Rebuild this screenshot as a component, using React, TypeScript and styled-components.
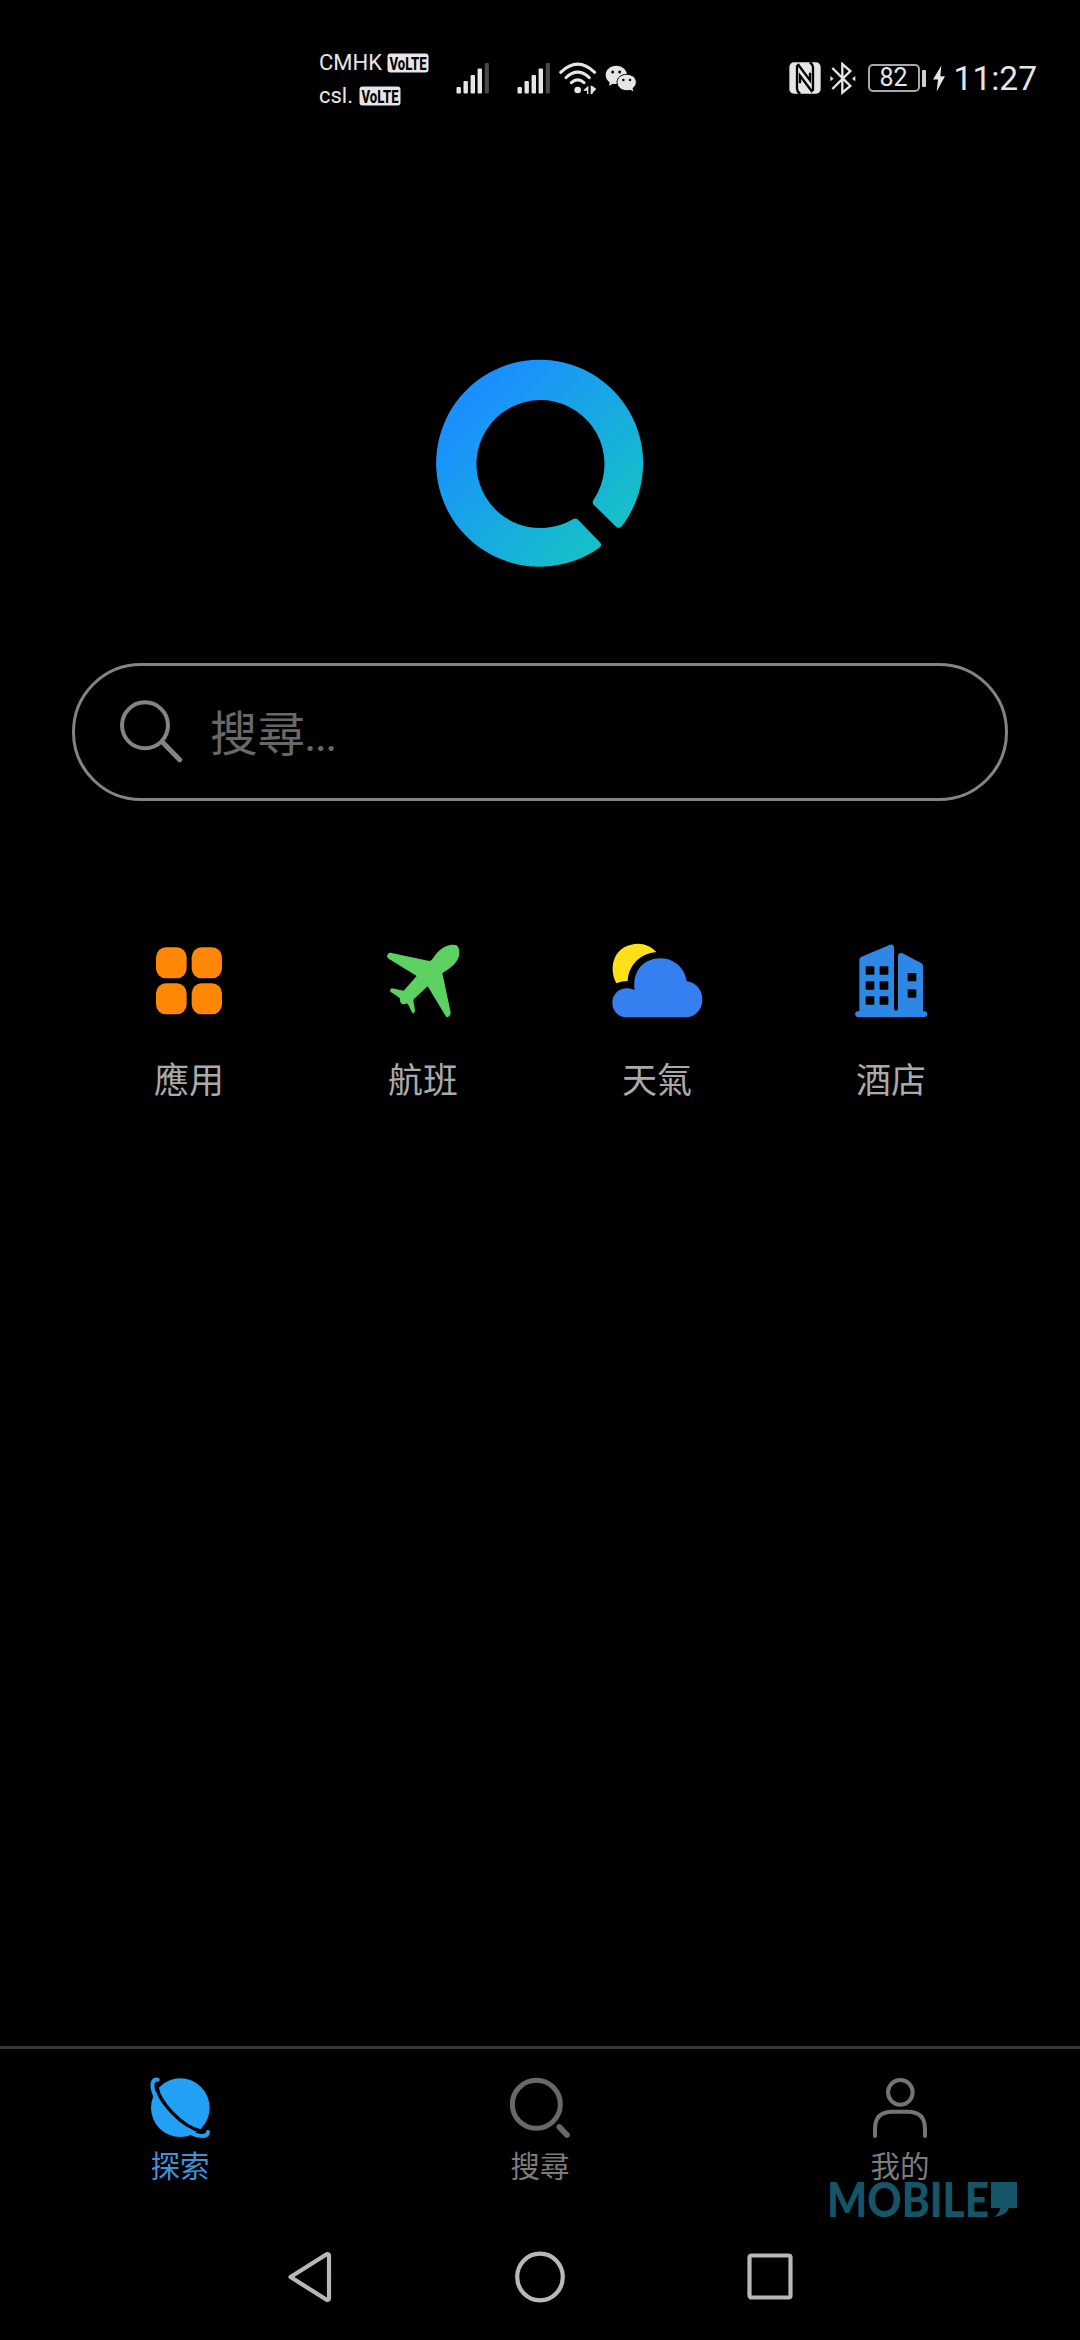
import React from "react";
import styled, { createGlobalStyle } from "styled-components";

const GlobalStyle = createGlobalStyle`
  * { box-sizing: border-box; }
  html, body { margin: 0; padding: 0; background: #000; }
  svg { display: block; flex: none; }
`;

const cjk = `"Noto Sans CJK TC", "Noto Sans", sans-serif`;
const latin = `Roboto, "Noto Sans CJK TC", sans-serif`;

const Screen = styled.div`
  position: relative;
  display: flex;
  flex-direction: column;
  width: 1080px;
  height: 2340px;
  background: #000;
  overflow: hidden;
  font-family: ${cjk};
`;

const StatusBar = styled.header`
  display: flex;
  justify-content: space-between;
  align-items: center;
  height: 156px;
  padding: 0 43px 0 319px;
  color: #e6e6e6;
  font-family: ${latin};
`;

const StatusGroup = styled.div`
  display: flex;
  align-items: center;
`;

const Carriers = styled.div`
  display: flex;
  flex-direction: column;
  width: 137px;
  padding-top: 2px;
`;

const Carrier = styled.div<{ $gap: number }>`
  display: flex;
  align-items: center;
  gap: ${(p) => p.$gap}px;
  height: 33px;
  font-size: 22px;
  line-height: 33px;
`;

const Slot = styled.div<{ $left: number }>`
  margin-left: ${(p) => p.$left}px;
`;

const Battery = styled.div`
  display: flex;
  align-items: center;
  justify-content: center;
  width: 52px;
  height: 28px;
  margin-left: 12px;
  border: 2px solid #a8a8a8;
  border-radius: 5px;
  font-size: 25px;
  line-height: 24px;
`;

const BatteryTip = styled.div`
  width: 4px;
  height: 17px;
  margin-left: 2px;
  border-radius: 1px;
  background: #d0d0d0;
`;

const Clock = styled.time`
  margin-left: 9px;
  padding-top: 1px;
  font-size: 33.5px;
  line-height: 40px;
`;

const Main = styled.main`
  display: flex;
  flex-direction: column;
  align-items: center;
  flex: 1;
  padding: 203px 72px 0;
`;

const SearchBox = styled.div`
  display: flex;
  align-items: center;
  width: 936px;
  height: 138px;
  margin-top: 96px;
  padding-left: 45px;
  border: 3px solid #848484;
  border-radius: 69px;
`;

const SearchIconWrap = styled.div`
  margin-top: -2px;
`;

const Placeholder = styled.span`
  display: flex;
  align-items: baseline;
  margin: 5px 0 0 27px;
  color: #686868;
  font-size: 47.5px;
  line-height: 60px;
`;

const Dots = styled.span`
  font-family: ${latin};
  font-size: 38px;
  font-weight: 500;
`;

const Shortcuts = styled.div`
  display: grid;
  grid-template-columns: repeat(4, 1fr);
  width: 936px;
  margin-top: 130px;
`;

const Shortcut = styled.div`
  display: flex;
  flex-direction: column;
  align-items: center;
`;

const ShortcutIcon = styled.div`
  display: flex;
  justify-content: center;
  align-items: center;
  height: 100px;
`;

const ShortcutLabel = styled.span`
  margin-top: 22px;
  color: #aaaaaa;
  font-size: 35px;
  line-height: 50px;
`;

const TabBar = styled.nav`
  display: grid;
  grid-template-columns: repeat(3, 1fr);
  height: 166px;
  padding-top: 28px;
  border-top: 3px solid #373737;
`;

const Tab = styled.div<{ $color: string }>`
  display: flex;
  flex-direction: column;
  align-items: center;
  color: ${(p) => p.$color};
  font-size: 29.5px;
  line-height: 40px;
`;

const TabLabel = styled.span`
  margin-top: 5px;
`;

const SystemNav = styled.div`
  display: flex;
  justify-content: center;
  align-items: flex-start;
  gap: 181px;
  height: 128px;
  padding: 38px 0 0 0;
`;

const Watermark = styled.div`
  position: absolute;
  left: 826px;
  top: 2168px;
  pointer-events: none;
`;

const VolteBadge = () => (
  <svg width="42" height="20" viewBox="0 0 42 20">
    <rect x="0.5" y="0.5" width="41" height="19" rx="3" fill="#e6e6e6" />
    <text x="2.5" y="16.5" textLength="37" lengthAdjust="spacingAndGlyphs" fontFamily="Roboto, sans-serif" fontWeight="800" fontSize="18" fill="#000">VoLTE</text>
  </svg>
);

const Signal = () => (
  <svg width="34" height="32" viewBox="0 0 34 32" fill="#e6e6e6">
    <rect x="0.5" y="25" width="4.4" height="6.5" rx="1" />
    <rect x="7.5" y="19" width="4.4" height="12.5" rx="1" />
    <rect x="14.6" y="13" width="4.4" height="18.5" rx="1" />
    <rect x="21.6" y="6.5" width="4.4" height="25" rx="1" />
    <rect x="28.7" y="1" width="4.2" height="30.5" rx="1" fill="#484848" />
  </svg>
);

const Wifi = () => (
  <svg width="38" height="32" viewBox="0 0 114 96" fill="none" stroke="#e6e6e6" strokeWidth="9" strokeLinecap="round">
    <path d="M5 31Q56-18 107 31" />
    <path d="M21 47Q56 14 91 47" />
    <path d="M37 62Q56 45 75 62" />
    <circle cx="56" cy="84" r="10" fill="#e6e6e6" stroke="none" />
    <path d="M74 84L88 71V96L84 96V86H74zM95 71H99L112 81L101 92V96H95z" fill="#e6e6e6" stroke="none" />
  </svg>
);

const WeChat = () => (
  <svg width="32" height="27" viewBox="912 76 96 81">
    <path d="M946 78c-18 0-32 12-32 28 0 9 5 17 12 22l-2 10 12-6c3 1 7 1 10 1 18 0 32-12 32-27s-14-28-32-28z" fill="#e6e6e6" />
    <path d="M977 104c-16 0-29 10-29 24s13 25 29 25c4 0 7 0 10-1l12 5-3-11c6-5 10-11 10-18 0-14-13-24-29-24z" fill="#e6e6e6" stroke="#000" strokeWidth="3" />
    <g fill="#000"><circle cx="935" cy="97" r="4.5" /><circle cx="956" cy="97" r="4.5" /><circle cx="967" cy="121" r="3.8" /><circle cx="987" cy="121" r="3.8" /></g>
  </svg>
);

const Nfc = () => (
  <svg width="32" height="32" viewBox="54 66 96 96">
    <rect x="55" y="67" width="94" height="94" rx="14" fill="#e6e6e6" />
    <path d="M78 76V146Q79 158 88 161M80 72L117 121V98M126 153V82Q125 71 116 67M124 156L87 107V130" fill="none" stroke="#000" strokeWidth="7" />
  </svg>
);

const Bluetooth = () => (
  <svg width="26" height="33" viewBox="176 64 78 99" fill="none" stroke="#e6e6e6" strokeWidth="7">
    <path d="M183 82L237 136L213 156V70L237 91L183 145" />
    <path d="M177 106l10 8-10 8zM252 106l-10 8 10 8z" fill="#e6e6e6" stroke="none" />
  </svg>
);

const Bolt = () => (
  <svg width="12" height="27" viewBox="485 76 36 78">
    <path d="M510 76L485 118H500L496 154L521 108H507z" fill="#e6e6e6" />
  </svg>
);

const Logo = () => (
  <svg width="208" height="208" viewBox="47 58 624 624">
    <defs>
      <linearGradient id="ring" gradientUnits="userSpaceOnUse" x1="170" y1="180" x2="580" y2="590">
        <stop offset="0" stopColor="#1a90ff" />
        <stop offset="1" stopColor="#15c1c6" />
      </linearGradient>
    </defs>
    <path fill="url(#ring)" d="M604 560A310.500 310.500 0 1 0 536 625Q546 617 540 609L473 540Q467 534 459 538A192 192 0 1 1 520 480Q514 488 520 495L588 562Q597 568 604 560z" />
  </svg>
);

const FieldSearch = () => (
  <svg width="63" height="63" viewBox="180 149 189 189" fill="none" stroke="#848484">
    <circle cx="255" cy="225" r="69" strokeWidth="12" />
    <path d="M307 275L359 328" strokeWidth="15" strokeLinecap="round" />
  </svg>
);

const AppsIcon = () => (
  <svg width="66" height="68" viewBox="48 81 198 202" fill="#ff8706">
    <rect x="48" y="81" width="92" height="93" rx="30" />
    <rect x="155" y="81" width="91" height="93" rx="30" />
    <rect x="48" y="189" width="92" height="93" rx="30" />
    <rect x="155" y="189" width="91" height="93" rx="30" />
  </svg>
);

const PlaneIcon = () => (
  <svg width="74" height="74" viewBox="739 73 222 222">
    <path fill="#5dd062" d="M742 111C743 103 748 98 756 100L869 124C878 123 884 108 895 96C913 78 937 71 951 77C962 88 962 108 951 124C939 143 920 151 908 161L932 273C935 284 930 291 922 293C917 289 916 285 912 279L864 200L822 239C819 248 828 265 825 277C824 282 819 283 817 278L805 254Q801 249 796 253Q780 256 781 237Q777 231 753 217Q748 209 757 206L792 213L831 169L747 117z" />
  </svg>
);

const WeatherIcon = () => (
  <svg width="92" height="76" viewBox="62 70 276 228">
    <path fill="#ffe01b" d="M78 191C57 152 66 103 102 83C136 64 174 70 198 97C148 101 114 139 112 184Q95 184 78 191z" />
    <path fill="#367ff0" d="M133 211C125 151 163 116 210 116C255 116 285 150 289 185C318 189 336 211 336 240C336 270 313 293 287 293H109C84 293 66 273 66 249C66 217 99 196 133 211z" />
  </svg>
);

const HotelIcon = () => (
  <svg width="74" height="74" viewBox="792 72 222 222">
    <path fill="#2c87e5" d="M802 274H808V119Q808 114 813 111L900 74Q912 72 912 84V267Q912 272 918 272Q924 272 924 267V108Q925 98 936 99L993 129Q999 132 999 138V274H1005C1014 276 1014 289 1005 291H802C793 289 793 276 802 274z" />
    <g fill="#000">
      {[139, 184, 229].map((y) => (
        <React.Fragment key={y}>
          <rect x="827" y={y} width="26" height="25" rx="2" />
          <rect x="869" y={y} width="26" height="25" rx="2" />
        </React.Fragment>
      ))}
      <rect x="953" y="159" width="26" height="25" rx="2" />
      <rect x="953" y="208" width="26" height="25" rx="2" />
    </g>
  </svg>
);

const ExploreIcon = () => (
  <svg width="60" height="62" viewBox="60 126 180 186">
    <circle cx="151" cy="218" r="88" fill="#22a0f5" />
    <path d="M83 134C66 132 65 150 70 168C80 207 130 268 175 291C197 302 232 311 234 291" fill="none" stroke="#22a0f5" strokeWidth="12" strokeLinecap="round" />
    <path d="M82 157C82 192 152 276 216 289" fill="none" stroke="#000" strokeWidth="10" strokeLinecap="round" />
  </svg>
);

const TabSearchIcon = () => (
  <svg width="60" height="62" viewBox="60 126 180 186" fill="none" stroke="#686868">
    <circle cx="139" cy="208" r="72" strokeWidth="15" />
    <path d="M208 276L231 300" strokeWidth="17" strokeLinecap="round" />
  </svg>
);

const PersonIcon = () => (
  <svg width="60" height="62" viewBox="180 126 180 186" fill="none" stroke="#747474" strokeWidth="12" strokeLinecap="round">
    <circle cx="271" cy="172" r="37" />
    <path d="M195 303V281Q195 230 247 230H293Q345 230 345 281V303" />
  </svg>
);

const BackIcon = () => (
  <svg width="45" height="54" viewBox="0 0 45 54" fill="none" stroke="#b8b8b8" strokeWidth="4.2" strokeLinejoin="round">
    <path d="M2.500 27L39 4Q41 4 41 6V48Q41 50 39 50z" />
  </svg>
);

const HomeIcon = () => (
  <svg width="52" height="54" viewBox="0 0 52 54" fill="none" stroke="#b8b8b8" strokeWidth="4.2">
    <ellipse cx="26" cy="27" rx="22.800" ry="23.300" />
  </svg>
);

const RecentIcon = () => (
  <svg width="46" height="54" viewBox="0 0 46 54" fill="none" stroke="#b8b8b8" strokeWidth="4.2">
    <rect x="2.500" y="5.500" width="41" height="42" rx="2" />
  </svg>
);

const shortcuts = [
  { label: "應用", icon: <AppsIcon /> },
  { label: "航班", icon: <PlaneIcon /> },
  { label: "天氣", icon: <WeatherIcon /> },
  { label: "酒店", icon: <HotelIcon /> },
];

const tabs = [
  { label: "探索", icon: <ExploreIcon />, color: "#4292d8" },
  { label: "搜尋", icon: <TabSearchIcon />, color: "#7c7c7c" },
  { label: "我的", icon: <PersonIcon />, color: "#7c7c7c" },
];

export default function App() {
  return (
    <Screen>
      <GlobalStyle />
      <StatusBar>
        <StatusGroup>
          <Carriers>
            <Carrier $gap={5}>CMHK<VolteBadge /></Carrier>
            <Carrier $gap={6}>csl.<VolteBadge /></Carrier>
          </Carriers>
          <Slot $left={0}><Signal /></Slot>
          <Slot $left={27}><Signal /></Slot>
          <Slot $left={8}><Wifi /></Slot>
          <Slot $left={8}><WeChat /></Slot>
        </StatusGroup>
        <StatusGroup>
          <Nfc />
          <Slot $left={9}><Bluetooth /></Slot>
          <Battery>82</Battery>
          <BatteryTip />
          <Slot $left={7}><Bolt /></Slot>
          <Clock>11:27</Clock>
        </StatusGroup>
      </StatusBar>
      <Main>
        <Logo />
        <SearchBox>
          <SearchIconWrap><FieldSearch /></SearchIconWrap>
          <Placeholder>搜尋<Dots>...</Dots></Placeholder>
        </SearchBox>
        <Shortcuts>
          {shortcuts.map((s) => (
            <Shortcut key={s.label}>
              <ShortcutIcon>{s.icon}</ShortcutIcon>
              <ShortcutLabel>{s.label}</ShortcutLabel>
            </Shortcut>
          ))}
        </Shortcuts>
      </Main>
      <TabBar>
        {tabs.map((t) => (
          <Tab key={t.label} $color={t.color}>
            {t.icon}
            <TabLabel>{t.label}</TabLabel>
          </Tab>
        ))}
      </TabBar>
      <SystemNav>
        <BackIcon />
        <HomeIcon />
        <RecentIcon />
      </SystemNav>
      <Watermark>
        <svg width="196" height="64" viewBox="-2 -10 196 64" fill="#165468">
          <text x="-1" y="38.500" textLength="162" lengthAdjust="spacingAndGlyphs" fontFamily="Lato, sans-serif" fontWeight="900" fontSize="48">MOBILE</text>
          <path d="M163 4H189V30H181Q178 38 166 39Q172 35 172 30H163z" />
        </svg>
      </Watermark>
    </Screen>
  );
}
